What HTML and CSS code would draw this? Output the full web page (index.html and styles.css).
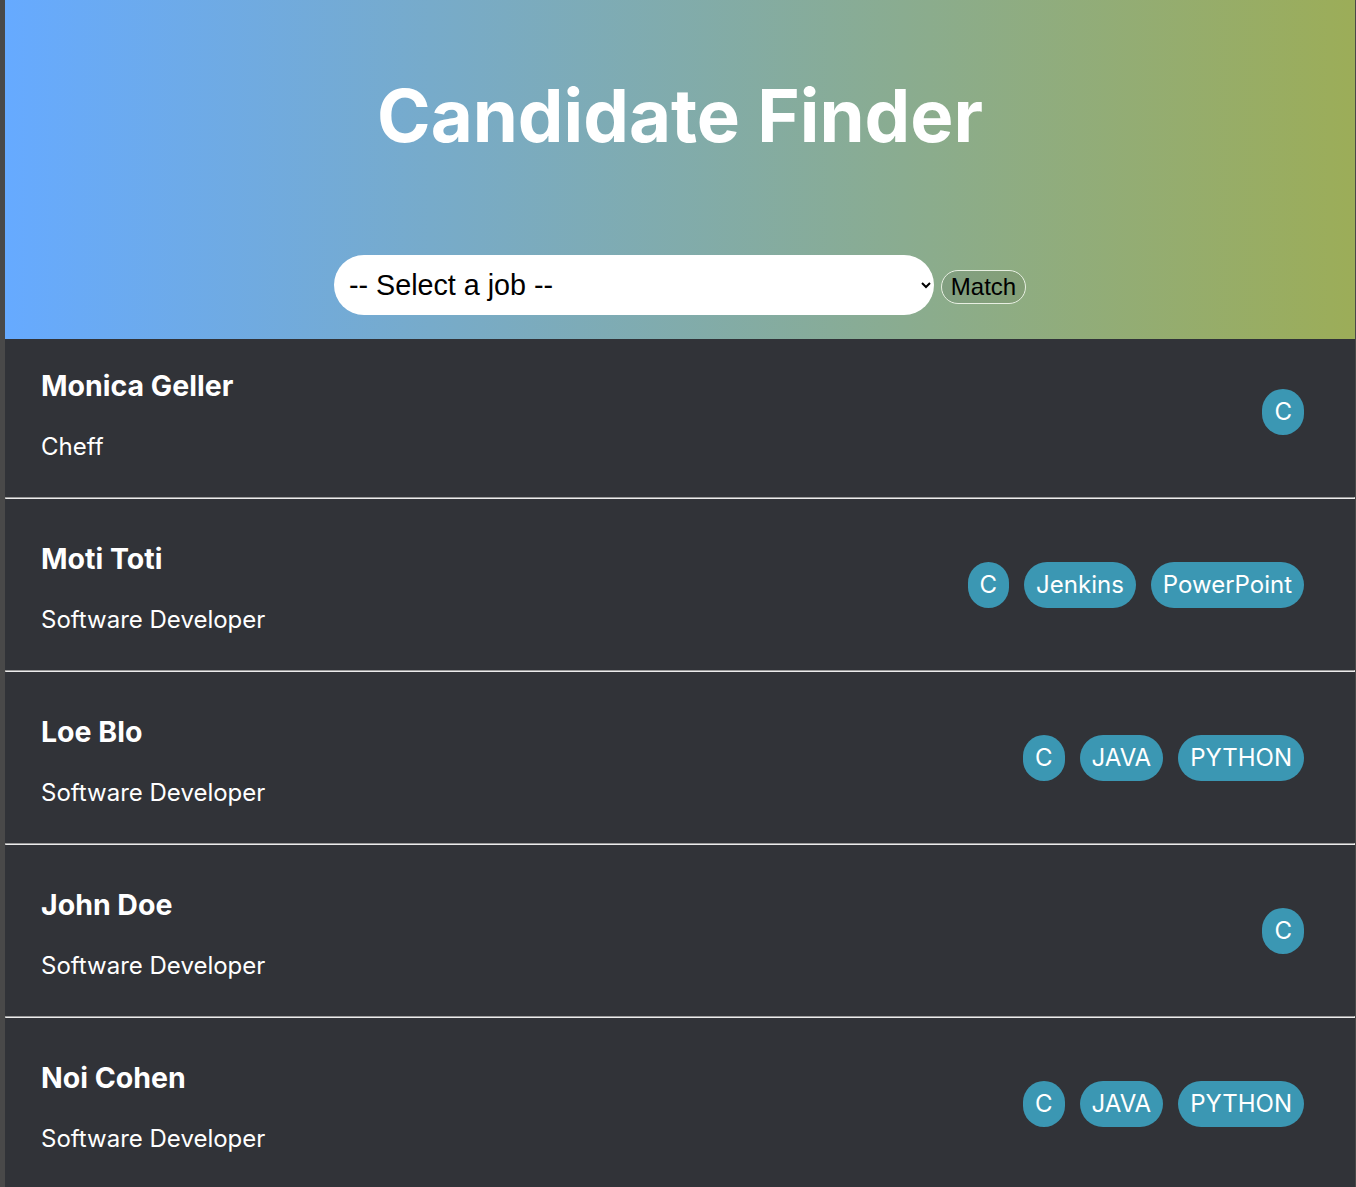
FILE: index.html
```html
<!DOCTYPE html>
<html lang="en">
<head>
<meta charset="utf-8">
<title>Candidate Finder</title>
<link rel="stylesheet" href="styles.css">
</head>
<body>
<div class="app">
  <header class="hero">
    <h1 class="title">Candidate Finder</h1>
    <div class="controls">
      <select class="job-select">
        <option>-- Select a job --</option>
      </select>
      <button class="match-btn">Match</button>
    </div>
  </header>
  <main class="list">
    <div class="card">
      <div class="info">
        <h2 class="name">Monica Geller</h2>
        <p class="job">Cheff</p>
      </div>
      <div class="tags"><span class="tag">C</span></div>
    </div>
    <hr class="sep">
    <div class="card">
      <div class="info">
        <h2 class="name">Moti Toti</h2>
        <p class="job">Software Developer</p>
      </div>
      <div class="tags"><span class="tag">C</span><span class="tag">Jenkins</span><span class="tag">PowerPoint</span></div>
    </div>
    <hr class="sep">
    <div class="card">
      <div class="info">
        <h2 class="name">Loe Blo</h2>
        <p class="job">Software Developer</p>
      </div>
      <div class="tags"><span class="tag">C</span><span class="tag">JAVA</span><span class="tag">PYTHON</span></div>
    </div>
    <hr class="sep">
    <div class="card">
      <div class="info">
        <h2 class="name">John Doe</h2>
        <p class="job">Software Developer</p>
      </div>
      <div class="tags"><span class="tag">C</span></div>
    </div>
    <hr class="sep">
    <div class="card">
      <div class="info">
        <h2 class="name">Noi Cohen</h2>
        <p class="job">Software Developer</p>
      </div>
      <div class="tags"><span class="tag">C</span><span class="tag">JAVA</span><span class="tag">PYTHON</span></div>
    </div>
  </main>
</div>
</body>
</html>
```

FILE: styles.css
```css
html, body {
  margin: 0;
  padding: 0;
}
body {
  background: #494949;
  font-family: Inter, "Noto Sans", sans-serif;
  padding: 0 1px 0 5px;
  min-height: 1187px;
}
.app {
  background: #313338;
  min-height: 1187px;
}
.hero {
  background: linear-gradient(to right, #66aaff, #9cad58);
  height: 339px;
  box-sizing: border-box;
  padding-top: 67px;
  text-align: center;
}
.title {
  margin: 0;
  color: #fff;
  font-family: Inter, sans-serif;
  font-weight: 700;
  font-size: 72.5px;
  line-height: 97px;
}
.controls {
  margin-top: 91px;
  display: flex;
  justify-content: center;
  align-items: center;
  gap: 7px;
}
.job-select {
  width: 600px;
  height: 60px;
  border: none;
  border-radius: 30px;
  background: #fff;
  padding: 0 13px 0 11px;
  font-family: "Liberation Sans", Arial, sans-serif;
  font-size: 28.7px;
  color: #000;
}
.match-btn {
  margin-top: 4px;
  width: 85px;
  height: 34px;
  padding: 0;
  border: 1px solid #e8efe2;
  border-radius: 17px;
  background: rgba(0, 0, 0, 0.07);
  font-family: "Liberation Sans", Arial, sans-serif;
  font-size: 24px;
  color: #000;
}
.card {
  display: flex;
  justify-content: space-between;
  align-items: center;
  padding: 36px 36px;
}
.card:first-child {
  padding-top: 23px;
}
.info {
  padding-top: 7px;
}
.name {
  margin: 0 0 29px;
  color: #fff;
  font-size: 28.5px;
  font-weight: 700;
  line-height: 34px;
}
.job {
  margin: 0;
  color: #fff;
  font-size: 24px;
  line-height: 29px;
}
.tags {
  display: flex;
  gap: 15px;
  margin-right: 15px;
}
.tag {
  background: #3b97b3;
  color: #fff;
  font-size: 24px;
  line-height: 26px;
  padding: 10px 12px;
  border-radius: 23px;
}
.sep {
  margin: 0;
  height: 0;
  border-style: solid;
  border-width: 1px;
  border-color: #9a9a9a #ececec #ececec #9a9a9a;
}
```
